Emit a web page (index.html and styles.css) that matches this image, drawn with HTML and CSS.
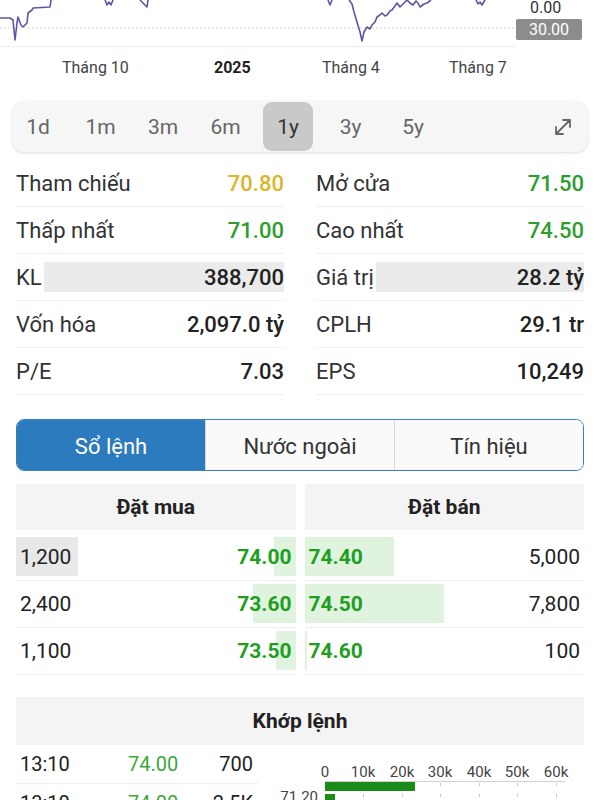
FILE: index.html
```html
<!DOCTYPE html>
<html lang="vi">
<head>
    <meta charset="UTF-8">
    <meta name="viewport" content="width=device-width, initial-scale=1.0">
    <title>Chi tiết cổ phiếu</title>
    <link rel="stylesheet" href="styles.css">
</head>
<body>
    <div class="chart">
        <svg class="chart-svg" width="600" height="50" viewBox="0 0 600 50">
            <line x1="0" y1="28" x2="515" y2="28" class="grid-dot"/>
            <line x1="0" y1="46.5" x2="515" y2="46.5" class="grid-base"/>
            <path class="price-line" d="M0,18 L10,18 L13,20 L15,40 L17,23 L18,17 L21,25 L23,27 L27,23 L28,13 L32,10 L33,8 L50,7 L51,0"/>
            <path class="price-line" d="M105,0 L107,5 L109,2 L111,5 L113,0"/>
            <path class="price-line" d="M140,0 L144,4 L147,7 L148,0"/>
            <path class="price-line" d="M328,0 L330,5 L332,0"/>
            <path class="price-line" d="M349,0 L352,4 L354,12 L357,22 L360,32 L362,41 L364,32 L367,27 L370,29 L372,25 L375,22 L377,17 L380,15 L382,13 L385,16 L387,15 L390,11 L392,10 L395,6 L397,3 L400,7 L403,4 L407,0 L410,3 L413,5 L416,1 L418,3 L420,7 L424,4 L427,3 L431,0"/>
            <path class="price-line" d="M476,0 L478,4 L480,2 L482,5 L485,0"/>
        </svg>
        <span class="y-label">0.00</span>
        <span class="y-badge">30.00</span>
        <span class="x-label m-oct">Tháng 10</span>
        <span class="x-label year">2025</span>
        <span class="x-label m-apr">Tháng 4</span>
        <span class="x-label m-jul">Tháng 7</span>
    </div>

    <div class="periods">
        <span class="period">1d</span>
        <span class="period">1m</span>
        <span class="period">3m</span>
        <span class="period">6m</span>
        <span class="period active">1y</span>
        <span class="period">3y</span>
        <span class="period">5y</span>
        <span class="expand">
            <svg width="22" height="22" viewBox="0 0 22 22">
                <path d="M4,18 L18,4 M11,4 L18,4 L18,11 M4,11 L4,18 L11,18" fill="none" stroke="#666" stroke-width="1.8" stroke-linecap="round" stroke-linejoin="round"/>
            </svg>
        </span>
    </div>

    <div class="stats">
        <div class="stat"><span class="label">Tham chiếu</span><span class="value ref">70.80</span></div>
        <div class="stat"><span class="label">Mở cửa</span><span class="value up">71.50</span></div>
        <div class="stat"><span class="label">Thấp nhất</span><span class="value up">71.00</span></div>
        <div class="stat"><span class="label">Cao nhất</span><span class="value up">74.50</span></div>
        <div class="stat"><span class="label">KL</span><span class="stat-bar"><span class="value">388,700</span></span></div>
        <div class="stat"><span class="label">Giá trị</span><span class="stat-bar"><span class="value">28.2 tỷ</span></span></div>
        <div class="stat"><span class="label">Vốn hóa</span><span class="value">2,097.0 tỷ</span></div>
        <div class="stat"><span class="label">CPLH</span><span class="value">29.1 tr</span></div>
        <div class="stat"><span class="label">P/E</span><span class="value">7.03</span></div>
        <div class="stat"><span class="label">EPS</span><span class="value">10,249</span></div>
    </div>

    <div class="tabs">
        <span class="tab active">Sổ lệnh</span>
        <span class="tab">Nước ngoài</span>
        <span class="tab">Tín hiệu</span>
    </div>

    <div class="book">
        <div class="book-head">Đặt mua</div>
        <div class="book-head">Đặt bán</div>

        <div class="book-cell">
            <span class="fill gray" style="width: 62px"></span>
            <span class="fill buy" style="width: 22px"></span>
            <span class="qty">1,200</span><span class="price">74.00</span>
        </div>
        <div class="book-cell">
            <span class="fill sell" style="width: 89px"></span>
            <span class="price">74.40</span><span class="qty">5,000</span>
        </div>

        <div class="book-cell">
            <span class="fill buy" style="width: 43px"></span>
            <span class="qty">2,400</span><span class="price">73.60</span>
        </div>
        <div class="book-cell">
            <span class="fill sell" style="width: 139px"></span>
            <span class="price">74.50</span><span class="qty">7,800</span>
        </div>

        <div class="book-cell">
            <span class="fill buy" style="width: 20px"></span>
            <span class="qty">1,100</span><span class="price">73.50</span>
        </div>
        <div class="book-cell">
            <span class="fill sell" style="width: 2px"></span>
            <span class="price">74.60</span><span class="qty">100</span>
        </div>
    </div>

    <div class="match-head">Khớp lệnh</div>

    <div class="trades">
        <div class="trade-list">
            <div class="trade"><span>13:10</span><span class="trade-price">74.00</span><span class="trade-vol">700</span></div>
            <div class="trade"><span>13:10</span><span class="trade-price">74.00</span><span class="trade-vol">2.5K</span></div>
        </div>
        <svg class="vol-chart" width="319" height="70" viewBox="0 0 319 70">
            <g class="axis-text">
                <text x="60" y="32" text-anchor="middle">0</text>
                <text x="98" y="32" text-anchor="middle">10k</text>
                <text x="137" y="32" text-anchor="middle">20k</text>
                <text x="175" y="32" text-anchor="middle">30k</text>
                <text x="214" y="32" text-anchor="middle">40k</text>
                <text x="252" y="32" text-anchor="middle">50k</text>
                <text x="291" y="32" text-anchor="middle">60k</text>
            </g>
            <line x1="60" y1="36.5" x2="300" y2="36.5" class="axis-line"/>
            <g class="ticks">
                <line x1="98.5" y1="38" x2="98.5" y2="70"/>
                <line x1="137.5" y1="38" x2="137.5" y2="70"/>
                <line x1="175.5" y1="38" x2="175.5" y2="70"/>
                <line x1="214.5" y1="38" x2="214.5" y2="70"/>
                <line x1="252.5" y1="38" x2="252.5" y2="70"/>
                <line x1="291.5" y1="38" x2="291.5" y2="70"/>
            </g>
            <rect x="60" y="37" width="90" height="9" class="vol-bar"/>
            <rect x="60" y="49" width="10" height="12" class="vol-bar"/>
            <text x="53" y="57" text-anchor="end" class="axis-text">71.20</text>
        </svg>
    </div>
</body>
</html>
```

FILE: styles.css
```css
body {
    margin: 0;
    padding: 0;
    background-color: #fff;
    font-family: Roboto, "Noto Sans", sans-serif;
    color: #222;
    overflow: hidden;
}

/* price chart */
.chart {
    position: relative;
    height: 90px;
}
.chart-svg {
    display: block;
}
.grid-dot {
    stroke: #c8c8c8;
    stroke-width: 1;
    stroke-dasharray: 1.5 2.5;
}
.grid-base {
    stroke: #eee;
    stroke-width: 1;
}
.price-line {
    fill: none;
    stroke: #5a56a3;
    stroke-width: 1.6;
    stroke-linejoin: round;
}
.y-label {
    position: absolute;
    left: 530px;
    top: -2px;
    font-size: 16px;
    color: #333;
}
.y-badge {
    position: absolute;
    left: 516px;
    top: 19px;
    width: 66px;
    height: 21px;
    line-height: 21px;
    text-align: center;
    font-size: 16px;
    color: #fff;
    background-color: #8c8c8c;
    border-radius: 2px;
}
.x-label {
    position: absolute;
    top: 58px;
    font-size: 16px;
    color: #444;
}
.m-oct { left: 62px; }
.year { left: 214px; font-weight: 700; color: #222; }
.m-apr { left: 322px; }
.m-jul { left: 449px; }

/* period switcher */
.periods {
    display: flex;
    align-items: center;
    height: 51px;
    margin: 11px 12px 0;
    padding-left: 1px;
    background-color: #f6f6f6;
    border-radius: 12px;
    box-shadow: 0 1px 3px rgba(0, 0, 0, 0.14);
}
.period {
    width: 50px;
    height: 49px;
    margin-right: 12.5px;
    display: flex;
    align-items: center;
    justify-content: center;
    font-size: 21px;
    color: #666;
    border-radius: 9px;
}
.period.active {
    background-color: #c9c9c9;
    color: #333;
}
.expand {
    margin-left: auto;
    margin-right: 14px;
    display: flex;
}

/* stats */
.stats {
    display: grid;
    grid-template-columns: 1fr 1fr;
    column-gap: 32px;
    padding: 0 16px;
    margin-top: 8px;
}
.stat {
    display: flex;
    align-items: center;
    justify-content: space-between;
    height: 46px;
    border-bottom: 1px solid #efefef;
    font-size: 22px;
}
.label {
    color: #333;
}
.value {
    font-weight: 500;
    color: #222;
}
.value.ref {
    color: #dbb52b;
}
.value.up {
    color: #2c9e2c;
}
.stat-bar {
    flex: 1;
    height: 30px;
    margin-left: 2px;
    display: flex;
    align-items: center;
    justify-content: flex-end;
    background-color: #ebebeb;
}

/* tabs */
.tabs {
    display: flex;
    height: 50px;
    margin: 24px 16px 0;
    border: 1.5px solid #3a7dba;
    border-radius: 8px;
    overflow: hidden;
}
.tab {
    flex: 1;
    display: flex;
    align-items: center;
    justify-content: center;
    padding-top: 2px;
    font-size: 22px;
    color: #333;
    background-color: #fafafa;
    border-left: 1px solid #d8d8d8;
}
.tab.active {
    background-color: #2c7bbe;
    color: #fff;
    border-left: none;
}

/* order book */
.book {
    display: grid;
    grid-template-columns: 1fr 1fr;
    column-gap: 9px;
    padding: 0 16px;
    margin-top: 13px;
}
.book-head {
    height: 46px;
    margin-bottom: 4px;
    display: flex;
    align-items: center;
    justify-content: center;
    background-color: #f4f4f4;
    font-size: 21px;
    font-weight: 700;
}
.book-cell {
    position: relative;
    height: 46px;
    padding: 0 4px;
    display: flex;
    align-items: center;
    justify-content: space-between;
    border-bottom: 1px solid #efefef;
    font-size: 21px;
}
.fill {
    position: absolute;
    top: 3px;
    bottom: 4px;
}
.fill.buy {
    right: 0;
    background-color: #dff3df;
}
.fill.sell {
    left: 0;
    background-color: #dff3df;
}
.fill.gray {
    left: 0;
    background-color: #e8e8e8;
}
.qty,
.price {
    position: relative;
}
.price {
    font-weight: 700;
    color: #1f9f1f;
}

/* matched orders */
.match-head {
    height: 48px;
    margin: 22px 16px 0;
    display: flex;
    align-items: center;
    justify-content: center;
    background-color: #f4f4f4;
    font-size: 21px;
    font-weight: 700;
}
.trades {
    display: flex;
    padding: 0 16px;
}
.trade-list {
    width: 242px;
    flex-shrink: 0;
}
.trade {
    display: grid;
    grid-template-columns: 108px auto 1fr;
    align-items: center;
    height: 38px;
    padding: 0 5px 0 4px;
    border-bottom: 1px solid #efefef;
    font-size: 20px;
}
.trade-price {
    color: #3aa83a;
}
.trade-vol {
    text-align: right;
}
.vol-chart {
    display: block;
    margin-left: 7px;
}
.axis-text {
    font-family: Roboto, sans-serif;
    font-size: 15px;
    fill: #444;
}
.axis-line {
    stroke: #d0d0d0;
    stroke-width: 1;
}
.ticks line {
    stroke: #c8c8c8;
    stroke-width: 1;
    stroke-dasharray: 3 8;
}
.vol-bar {
    fill: #1a8c1a;
}
```
